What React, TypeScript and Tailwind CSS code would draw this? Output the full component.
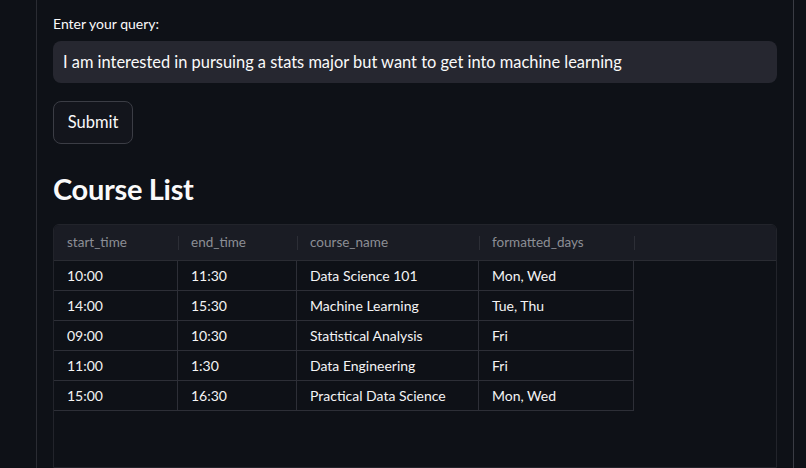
import React from 'react';

const rows = [
  ['10:00', '11:30', 'Data Science 101', 'Mon, Wed'],
  ['14:00', '15:30', 'Machine Learning', 'Tue, Thu'],
  ['09:00', '10:30', 'Statistical Analysis', 'Fri'],
  ['11:00', '1:30', 'Data Engineering', 'Fri'],
  ['15:00', '16:30', 'Practical Data Science', 'Mon, Wed'],
];

const headers = ['start_time', 'end_time', 'course_name', 'formatted_days'];
const widths = ['w-[124px]', 'w-[119px]', 'w-[182px]', 'w-[155px]'];

const App: React.FC = () => {
  return (
    <div className="h-[468px] w-[806px] overflow-hidden bg-[#0e1117] font-['Lato','Liberation_Sans',sans-serif] text-[#fafafa]">
      <div className="ml-[36px] mr-[12px] flex h-full border-x border-x-[#3a3c44] border-l-[#2a2c33]">
        <div className="flex w-full flex-col pl-[16px] pr-[16px] pt-[14px]">
          <label className="text-[14px] leading-[20px] text-[#fafafa]">Enter your query:</label>
          <div className="mt-[7px] flex h-[42px] items-center rounded-lg bg-[#262730] px-[10px] text-[16.4px]">
            I am interested in pursuing a stats major but want to get into machine learning
          </div>
          <div className="mt-[18px]">
            <button className="h-[43px] w-[80px] rounded-lg border border-[#3b3d45] bg-[#13151c] text-[16.5px] text-[#fafafa]">
              Submit
            </button>
          </div>
          <h1 className="mt-[27px] text-[29px] font-bold leading-[36px] tracking-[-0.3px]">Course List</h1>
          <div className="mt-[17px] flex-1 overflow-hidden rounded-t-md border border-[#22242b] bg-[#0e1117]">
            <div className="flex h-[36px] border-b border-[#2a2c33] bg-[#1a1c24]">
              {headers.map((h, i) => (
                <div key={h} className={`${widths[i]} relative flex items-center px-[13px] text-[13.5px] text-[#8c8e95]`}>
                  {h}
                  <span className="absolute right-[-1px] top-[11px] h-[14px] w-px bg-[#2c2e36]" />
                </div>
              ))}
            </div>
            {rows.map((r, ri) => (
              <div key={ri} className="flex h-[30px]">
                {r.map((c, ci) => (
                  <div
                    key={ci}
                    className={`${widths[ci]} flex items-center border-b border-r border-[#2d2f37] px-[13px] text-[14px] text-[#f4f4f5]`}
                  >
                    {c}
                  </div>
                ))}
              </div>
            ))}
          </div>
        </div>
      </div>
    </div>
  );
};

export default App;
